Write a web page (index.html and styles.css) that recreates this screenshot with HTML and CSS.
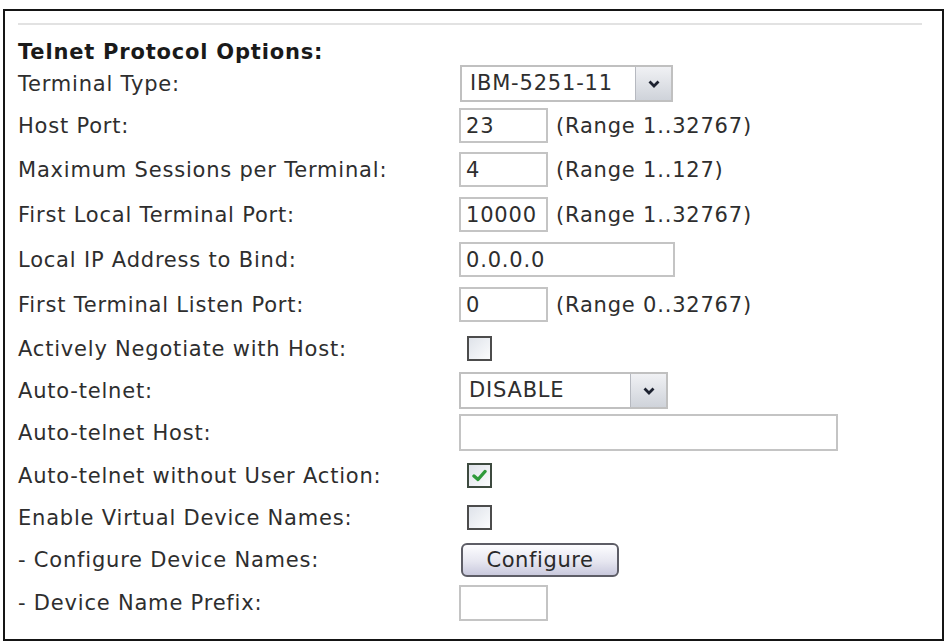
FILE: index.html
```html
<!DOCTYPE HTML>
<html lang="en">

<head>
    <meta charset="utf-8">
    <title>Telnet Protocol Options</title>
    <link rel="stylesheet" href="styles.css">
</head>

<body>
    <div class="panel">
        <div class="rule"></div>
        <div class="title">Telnet Protocol Options:</div>

        <div class="row short">
            <label>Terminal Type:</label>
            <div class="select term">
                <span class="value">IBM-5251-11</span>
                <span class="arrow"><svg width="12" height="8" viewBox="0 0 12 8"><polyline points="1.5,1.5 6,6 10.5,1.5" fill="none" stroke="#1d2230" stroke-width="2.8"/></svg></span>
            </div>
        </div>
        <div class="row">
            <label>Host Port:</label>
            <input type="text" class="small" value="23">
            <span class="range">(Range 1..32767)</span>
        </div>
        <div class="row tall">
            <label>Maximum Sessions per Terminal:</label>
            <input type="text" class="small" value="4">
            <span class="range">(Range 1..127)</span>
        </div>
        <div class="row tall">
            <label>First Local Terminal Port:</label>
            <input type="text" class="small" value="10000">
            <span class="range">(Range 1..32767)</span>
        </div>
        <div class="row tall">
            <label>Local IP Address to Bind:</label>
            <input type="text" class="medium" value="0.0.0.0">
        </div>
        <div class="row tall">
            <label>First Terminal Listen Port:</label>
            <input type="text" class="small" value="0">
            <span class="range">(Range 0..32767)</span>
        </div>
        <div class="row">
            <label>Actively Negotiate with Host:</label>
            <span class="check"></span>
        </div>
        <div class="row short">
            <label>Auto-telnet:</label>
            <div class="select mode">
                <span class="value">DISABLE</span>
                <span class="arrow"><svg width="12" height="8" viewBox="0 0 12 8"><polyline points="1.5,1.5 6,6 10.5,1.5" fill="none" stroke="#1d2230" stroke-width="2.8"/></svg></span>
            </div>
        </div>
        <div class="row">
            <label>Auto-telnet Host:</label>
            <input type="text" class="wide" value="">
        </div>
        <div class="row">
            <label>Auto-telnet without User Action:</label>
            <span class="check checked"><svg width="15" height="13" viewBox="0 0 15 13"><polyline points="2,7 6,10.5 13,2.5" fill="none" stroke="#2e9a3a" stroke-width="3.4" stroke-linecap="round" stroke-linejoin="round"/></svg></span>
        </div>
        <div class="row short">
            <label>Enable Virtual Device Names:</label>
            <span class="check"></span>
        </div>
        <div class="row">
            <label>- Configure Device Names:</label>
            <button class="btn">Configure</button>
        </div>
        <div class="row">
            <label>- Device Name Prefix:</label>
            <input type="text" class="small prefix" value="">
        </div>
    </div>
</body>

</html>
```

FILE: styles.css
```css
body {
    margin: 0;
    background-color: #fff;
    font-family: "DejaVu Sans", Verdana, sans-serif;
    color: #2e2e2e;
}

.panel {
    margin: 9px 1px 0 3px;
    height: 628px;
    border: 2px solid #151515;
    padding: 0 0 0 13px;
}

.rule {
    height: 2px;
    background-color: #e2e2e2;
    margin: 12px 20px 0 0;
}

.title {
    font-weight: bold;
    font-size: 21px;
    letter-spacing: 0.8px;
    color: #1a1a1a;
    height: 38px;
    line-height: 24px;
    padding-top: 15px;
    box-sizing: border-box;
}

.row {
    display: flex;
    align-items: center;
    height: 43px;
    font-size: 21px;
    letter-spacing: 0.8px;
}

.row.tall {
    height: 45px;
}

.row.short {
    height: 41px;
}

.row label {
    width: 441px;
    flex-shrink: 0;
}

.row input[type="text"] {
    box-sizing: border-box;
    height: 35px;
    border: 2px solid #c4c4c4;
    padding: 0 5px;
    font-family: inherit;
    font-size: 21px;
    letter-spacing: 0.8px;
    color: #2e2e2e;
    outline: none;
}

.row input.small {
    width: 89px;
}

.row input.medium {
    width: 216px;
}

.row input.wide {
    width: 379px;
    height: 37px;
}

.row input.prefix {
    height: 36px;
}

.range {
    margin-left: 8px;
}

/* fake select box */
.select {
    display: flex;
    box-sizing: border-box;
    height: 37px;
    border: 2px solid #c0c0c0;
    background-color: #fff;
}

.select.term {
    width: 213px;
    margin-left: 1px;
}

.select.mode {
    width: 209px;
}

.select .value {
    flex: 1;
    padding-left: 8px;
    line-height: 33px;
}

.select .arrow {
    width: 35px;
    display: flex;
    align-items: center;
    justify-content: center;
    background: linear-gradient(#f0f1f4, #cfd3da);
    border-left: 1px solid #b6b9c0;
}

.check {
    box-sizing: border-box;
    width: 25px;
    height: 25px;
    margin-left: 8px;
    border: 2px solid #4c4c4c;
    background: linear-gradient(135deg, #dfe3ea, #fbfcfd);
    display: flex;
    align-items: center;
    justify-content: center;
}

.check.checked {
    border-color: #3d4a3f;
}

.btn {
    box-sizing: border-box;
    width: 158px;
    height: 34px;
    margin-left: 2px;
    border: 2px solid #5d5d66;
    border-radius: 6px;
    background: linear-gradient(#fdfdff, #e6e6f0 55%, #c9c9dd);
    font-family: inherit;
    font-size: 21px;
    letter-spacing: 0.6px;
    color: #2a2a2a;
    padding: 0;
}
```
